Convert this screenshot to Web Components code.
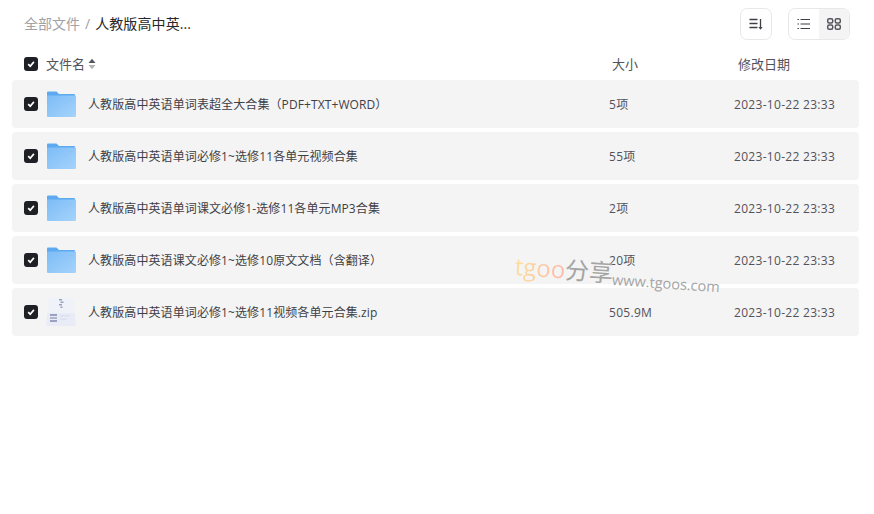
<!DOCTYPE html>
<html lang="zh">
<head>
<meta charset="utf-8">
<title>全部文件</title>
<style>
    html, body { margin: 0; background: #fff; }
    body { font-family: "Open Sans", "Noto Sans CJK SC", sans-serif; color: #3f3f46; }
</style>
</head>
<body>
<file-browser>
    <crumb-bar slot="top" current="人教版高中英..."></crumb-bar>
    <list-head slot="top"></list-head>
    <file-row name="人教版高中英语单词表超全大合集（PDF+TXT+WORD）" size="5项" date="2023-10-22 23:33"></file-row>
    <file-row name="人教版高中英语单词必修1~选修11各单元视频合集" size="55项" date="2023-10-22 23:33"></file-row>
    <file-row name="人教版高中英语单词课文必修1-选修11各单元MP3合集" size="2项" date="2023-10-22 23:33"></file-row>
    <file-row name="人教版高中英语课文必修1~选修10原文文档（含翻译）" size="20项" date="2023-10-22 23:33"></file-row>
    <file-row type="zip" name="人教版高中英语单词必修1~选修11视频各单元合集.zip" size="505.9M" date="2023-10-22 23:33"></file-row>
    <water-mark slot="over"></water-mark>
</file-browser>

<script>
class CheckBox extends HTMLElement {
    constructor() {
        super();
        const shadow = this.attachShadow({ mode: 'open' });
        shadow.innerHTML = `
            <style>
                :host { display: block; width: 14px; height: 14px; flex: none; }
                .box {
                    width: 14px;
                    height: 14px;
                    border-radius: 3px;
                    background: #1f2025;
                    display: flex;
                    align-items: center;
                    justify-content: center;
                }
            </style>
            <div class="box">
                <svg width="10" height="10" viewBox="0 0 10 10">
                    <path d="M2.2 5.2 4.2 7.2 7.9 2.9" fill="none" stroke="#fff" stroke-width="1.7"/>
                </svg>
            </div>
        `;
    }
}
customElements.define('check-box', CheckBox);

class FolderIcon extends HTMLElement {
    constructor() {
        super();
        const shadow = this.attachShadow({ mode: 'open' });
        shadow.innerHTML = `
            <style>
                :host { display: block; width: 30px; height: 30px; flex: none; }
                svg { display: block; }
            </style>
            <svg width="30" height="30" viewBox="0 0 30 30">
                <defs>
                    <linearGradient id="front" x1="0" y1="0" x2="1" y2="1">
                        <stop offset="0" stop-color="#7cbcf6"/>
                        <stop offset="1" stop-color="#a5d3fb"/>
                    </linearGradient>
                </defs>
                <path d="M1 3.500a1 1 0 0 1 1-1h8.500l2.500 2.500h15a1 1 0 0 1 1 1V9H1z" fill="#5eaaf0"/>
                <path d="M1 6.500h28a1 1 0 0 1 1 1V27a1 1 0 0 1-1 1H2a1 1 0 0 1-1-1z" fill="url(#front)"/>
                <rect x="23" y="10" width="4" height="1.500" fill="#8fc3f2"/>
            </svg>
        `;
    }
}
customElements.define('folder-icon', FolderIcon);

class ZipIcon extends HTMLElement {
    constructor() {
        super();
        const shadow = this.attachShadow({ mode: 'open' });
        shadow.innerHTML = `
            <style>
                :host { display: block; width: 30px; height: 30px; flex: none; }
                svg { display: block; }
            </style>
            <svg width="30" height="30" viewBox="0 0 30 30">
                <path d="M3 1h24l3 27a1 1 0 0 1-1 1H1a1 1 0 0 1-1-1z" fill="#e9ecf7"/>
                <path d="M3 1h24l2 15H1z" fill="#f0f2fa"/>
                <path d="M13 2h3v1.500h-3zM14.500 4.500h3V6h-3zM13 7h3v1.500h-3zM14.500 9.500h2V11h-2z" fill="#98a0bd"/>
                <rect x="4" y="17" width="7" height="2" fill="#9aa2bf"/>
                <rect x="4" y="20" width="7" height="2" fill="#aeb5cd"/>
                <rect x="4" y="23" width="7" height="2" fill="#9aa2bf"/>
                <rect x="14" y="18" width="10" height="1.500" fill="#dde0ee"/>
                <rect x="14" y="21.500" width="7" height="1.500" fill="#dde0ee"/>
            </svg>
        `;
    }
}
customElements.define('zip-icon', ZipIcon);

class CrumbBar extends HTMLElement {
    constructor() {
        super();
        const shadow = this.attachShadow({ mode: 'open' });
        shadow.innerHTML = `
            <style>
                :host { display: flex; align-items: center; height: 32px; padding: 8px 24px 8px 24px; }
                .path { display: flex; align-items: center; font-size: 14px; flex: 1; height: 30px; padding-bottom: 2px; }
                .root { color: #a1a1a6; }
                .sep { color: #a1a1a6; margin: 0 5px; }
                .now { color: #27272a; letter-spacing: .1px; }
                .btn {
                    box-sizing: border-box;
                    height: 32px;
                    border: 1px solid #e8e8e8;
                    border-radius: 7px;
                    display: flex;
                    background: #fff;
                    overflow: hidden;
                }
                .cell { width: 30px; display: flex; align-items: center; justify-content: center; }
                .cell.off { background: #f4f4f4; }
                .sort { margin-right: 16px; }
                svg { display: block; }
            </style>
            <div class="path">
                <span class="root">全部文件</span><span class="sep">/</span><span class="now">${this.getAttribute('current')}</span>
            </div>
            <div class="btn sort">
                <div class="cell">
                    <svg width="16" height="16" viewBox="0 0 16 16" fill="none" stroke="#3f3f46" stroke-width="1.300">
                        <path d="M1.500 3.500h8M1.500 7.500h8M1.500 11.500h8M12.500 3v9.500"/>
                        <path d="M10.500 11h4L12.500 13.800z" fill="#3f3f46" stroke="none"/>
                    </svg>
                </div>
            </div>
            <div class="btn">
                <div class="cell">
                    <svg width="16" height="16" viewBox="0 0 16 16" fill="none" stroke="#3f3f46" stroke-width="1.200">
                        <path d="M4.500 3.500H14M4.500 8H14M4.500 12.500H14M1.500 3.500h1.500M1.500 8h1.500M1.500 12.500h1.500"/>
                    </svg>
                </div>
                <div class="cell off">
                    <svg width="16" height="16" viewBox="0 0 16 16" fill="none" stroke="#55555c" stroke-width="1.500">
                        <rect x="1.700" y="2.700" width="5" height="4.300" rx="1.500"/>
                        <rect x="9.300" y="2.700" width="5" height="4.300" rx="1.500"/>
                        <rect x="1.700" y="9" width="5" height="4.300" rx="1.500"/>
                        <rect x="9.300" y="9" width="5" height="4.300" rx="1.500"/>
                    </svg>
                </div>
            </div>
        `;
    }
}
customElements.define('crumb-bar', CrumbBar);

class ListHead extends HTMLElement {
    constructor() {
        super();
        const shadow = this.attachShadow({ mode: 'open' });
        shadow.innerHTML = `
            <style>
                :host {
                    display: grid;
                    grid-template-columns: 588px 126px 1fr;
                    align-items: center;
                    height: 32px;
                    padding-left: 24px;
                    font-size: 13px;
                    color: #52525b;
                }
                .name { display: flex; align-items: center; gap: 8px; }
                .label { display: flex; align-items: center; gap: 3px; }
                .text { padding-bottom: 2px; }
                svg { display: block; }
            </style>
            <div class="name">
                <check-box></check-box>
                <div class="label">
                    <span class="text">文件名</span>
                    <svg width="8" height="12" viewBox="0 0 8 12">
                        <path d="M4 .8 7.500 5H.5z" fill="#55555c"/>
                        <path d="M4 11.200.5 7h7z" fill="#b4b4b8"/>
                    </svg>
                </div>
            </div>
            <div class="text">大小</div>
            <div class="text">修改日期</div>
        `;
    }
}
customElements.define('list-head', ListHead);

class FileRow extends HTMLElement {
    constructor() {
        super();
        const shadow = this.attachShadow({ mode: 'open' });
        const icon = this.getAttribute('type') === 'zip' ? '<zip-icon></zip-icon>' : '<folder-icon></folder-icon>';
        shadow.innerHTML = `
            <style>
                :host {
                    display: grid;
                    grid-template-columns: 585px 125px 1fr;
                    align-items: center;
                    height: 48px;
                    padding-left: 12px;
                    background: #f4f4f4;
                    border-radius: 4px;
                    font-size: 12px;
                    color: #3f3f46;
                }
                .name { display: flex; align-items: center; }
                check-box { margin-right: 8px; }
                .title { margin-left: 12px; white-space: nowrap; letter-spacing: .1px; }
                .meta { color: #52525b; letter-spacing: .3px; }
            </style>
            <div class="name">
                <check-box></check-box>
                ${icon}
                <span class="title">${this.getAttribute('name')}</span>
            </div>
            <div class="meta">${this.getAttribute('size')}</div>
            <div class="meta">${this.getAttribute('date')}</div>
        `;
    }
}
customElements.define('file-row', FileRow);

class WaterMark extends HTMLElement {
    constructor() {
        super();
        const shadow = this.attachShadow({ mode: 'open' });
        shadow.innerHTML = `
            <style>
                :host {
                    display: block;
                    position: absolute;
                    left: 516px;
                    top: 250px;
                    width: 210px;
                    height: 40px;
                    transform: rotate(4deg);
                    transform-origin: 0 0;
                    pointer-events: none;
                    white-space: nowrap;
                }
                .logo { font-size: 24px; line-height: 32px; font-family: "Open Sans", "Noto Sans CJK SC", sans-serif; color: #a4a4a4; }
                .logo b {
                    font-weight: 400;
                    background: linear-gradient(90deg, #fbdf9a, #fdb9ac);
                    -webkit-background-clip: text;
                    background-clip: text;
                    color: transparent;
                }
                .url {
                    position: absolute;
                    left: 98px;
                    top: 13px;
                    font-size: 14.500px;
                    font-family: "Open Sans", sans-serif;
                    color: #a4a4a4;
                }
            </style>
            <div class="logo"><b>tgoo</b>分享</div>
            <div class="url">www.tgoos.com</div>
        `;
    }
}
customElements.define('water-mark', WaterMark);

class FileBrowser extends HTMLElement {
    constructor() {
        super();
        const shadow = this.attachShadow({ mode: 'open' });
        shadow.innerHTML = `
            <style>
                :host { display: block; position: relative; width: 874px; height: 514px; overflow: hidden; }
                .list { display: flex; flex-direction: column; gap: 4px; padding: 0 15px 0 12px; }
            </style>
            <slot name="top"></slot>
            <div class="list"><slot></slot></div>
            <slot name="over"></slot>
        `;
    }
}
customElements.define('file-browser', FileBrowser);
</script>
</body>
</html>
